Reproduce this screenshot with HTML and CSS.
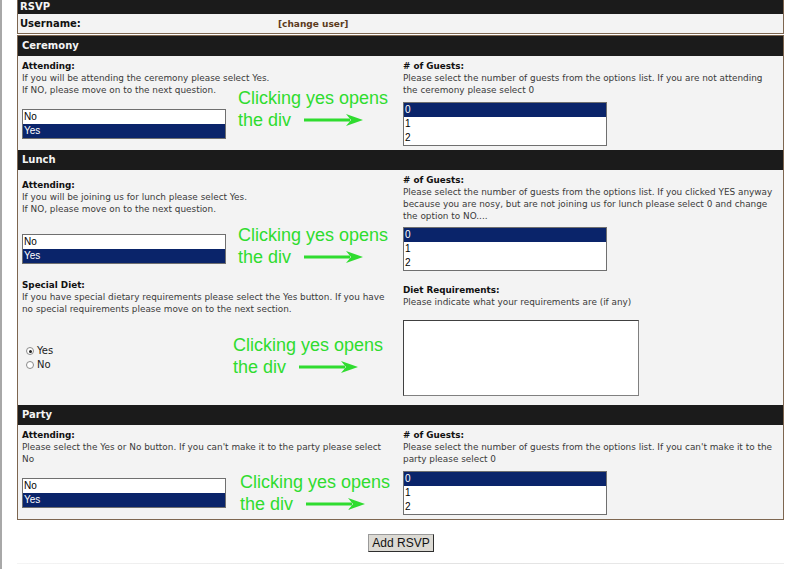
FILE: index.html
```html
<!DOCTYPE html>
<html lang="en">
<head>
    <meta charset="UTF-8">
    <title>RSVP</title>
    <link rel="stylesheet" href="styles.css">
</head>
<body>
    <div class="box top-box">
        <div class="bar bar-small">RSVP</div>
        <div class="user-row">
            <span class="user-label">Username:</span>
            <a class="change-user" href="#">[change user]</a>
        </div>
    </div>

    <div class="box form-box">
        <!-- Ceremony -->
        <div class="bar">Ceremony</div>
        <div class="row row-short">
            <div class="cell">
                <div class="label">Attending:</div>
                <div>If you will be attending the ceremony please select Yes.<br>If NO, please move on to the next question.</div>
                <div class="list list-left">
                    <div class="opt">No</div>
                    <div class="opt selected">Yes</div>
                </div>
            </div>
            <div class="cell">
                <div class="label"># of Guests:</div>
                <div>Please select the number of guests from the options list. If you are not attending<br>the ceremony please select 0</div>
                <div class="list">
                    <div class="opt selected">0</div>
                    <div class="opt">1</div>
                    <div class="opt">2</div>
                </div>
            </div>
            <div class="note note-ceremony">Clicking yes opens<br>the div <svg class="arrow" width="60" height="14" viewBox="0 0 60 14"><line x1="0" y1="7" x2="46" y2="7" stroke="#2fdc2f" stroke-width="3"/><polygon points="42,1 59,7 42,13 47,7" fill="#2fdc2f"/></svg></div>
        </div>

        <!-- Lunch -->
        <div class="bar">Lunch</div>
        <div class="row row-lunch">
            <div class="cell cell-low">
                <div class="label">Attending:</div>
                <div>If you will be joining us for lunch please select Yes.<br>If NO, please move on to the next question.</div>
                <div class="list list-left list-lunch">
                    <div class="opt">No</div>
                    <div class="opt selected">Yes</div>
                </div>
            </div>
            <div class="cell">
                <div class="label"># of Guests:</div>
                <div>Please select the number of guests from the options list. If you clicked YES anyway<br>because you are nosy, but are not joining us for lunch please select 0 and change<br>the option to NO....</div>
                <div class="list list-tight">
                    <div class="opt selected">0</div>
                    <div class="opt">1</div>
                    <div class="opt">2</div>
                </div>
            </div>
            <div class="note note-lunch">Clicking yes opens<br>the div <svg class="arrow" width="60" height="14" viewBox="0 0 60 14"><line x1="0" y1="7" x2="46" y2="7" stroke="#2fdc2f" stroke-width="3"/><polygon points="42,1 59,7 42,13 47,7" fill="#2fdc2f"/></svg></div>
        </div>
        <div class="row row-diet">
            <div class="cell">
                <div class="label">Special Diet:</div>
                <div>If you have special dietary requirements please select the Yes button. If you have<br>no special requirements please move on to the next section.</div>
                <div class="radios">
                    <div class="radio-item"><span class="radio checked"></span>Yes</div>
                    <div class="radio-item"><span class="radio"></span>No</div>
                </div>
            </div>
            <div class="cell cell-low">
                <div class="label">Diet Requirements:</div>
                <div>Please indicate what your requirements are (if any)</div>
                <div class="textarea"></div>
            </div>
            <div class="note note-diet">Clicking yes opens<br>the div <svg class="arrow" width="60" height="14" viewBox="0 0 60 14"><line x1="0" y1="7" x2="46" y2="7" stroke="#2fdc2f" stroke-width="3"/><polygon points="42,1 59,7 42,13 47,7" fill="#2fdc2f"/></svg></div>
        </div>

        <!-- Party -->
        <div class="bar">Party</div>
        <div class="row row-short">
            <div class="cell">
                <div class="label">Attending:</div>
                <div>Please select the Yes or No button. If you can't make it to the party please select<br>No</div>
                <div class="list list-left">
                    <div class="opt">No</div>
                    <div class="opt selected">Yes</div>
                </div>
            </div>
            <div class="cell">
                <div class="label"># of Guests:</div>
                <div>Please select the number of guests from the options list. If you can't make it to the<br>party please select 0</div>
                <div class="list">
                    <div class="opt selected">0</div>
                    <div class="opt">1</div>
                    <div class="opt">2</div>
                </div>
            </div>
            <div class="note note-party">Clicking yes opens<br>the div <svg class="arrow" width="60" height="14" viewBox="0 0 60 14"><line x1="0" y1="7" x2="46" y2="7" stroke="#2fdc2f" stroke-width="3"/><polygon points="42,1 59,7 42,13 47,7" fill="#2fdc2f"/></svg></div>
        </div>
    </div>

    <div class="actions">
        <button class="submit-btn" type="button">Add RSVP</button>
    </div>
    <div class="foot-line"></div>
</body>
</html>
```

FILE: styles.css
```css
body {
    margin: 0;
    min-height: 569px;
    border-left: 2px solid #a8a8a8;
    background-color: #fff;
    font-family: "DejaVu Sans", Verdana, sans-serif;
    font-size: 8.9px;
    line-height: 12px;
    color: #3a3a3a;
}

.box {
    margin: 0 16px 0 15px;
    border: 1px solid #7d6650;
    background-color: #f3f3f3;
}

.top-box {
    border-top: 0;
}

.form-box {
    margin-top: 1px;
}

.bar {
    height: 20px;
    padding-left: 4px;
    background-color: #1b1b1b;
    color: #f4f4f4;
    font-size: 10px;
    font-weight: bold;
    line-height: 20px;
}

.bar-small {
    height: 14px;
    padding-left: 2px;
    line-height: 14px;
}

.user-row {
    display: flex;
    align-items: center;
    height: 19px;
    padding-left: 2px;
}

.user-label {
    width: 258px;
    color: #111;
    font-size: 10px;
    font-weight: bold;
}

.change-user {
    color: #5b3a1d;
    font-size: 9px;
    font-weight: bold;
    text-decoration: none;
}

.row {
    position: relative;
    display: grid;
    grid-template-columns: 381px 1fr;
}

.row-short {
    height: 94px;
}

.row-lunch {
    height: 105px;
}

.row-diet {
    height: 130px;
}

.cell {
    padding: 4px 4px 0;
}

.cell-low {
    padding-top: 9px;
}

.label {
    color: #111;
    font-size: 8.8px;
    font-weight: bold;
}

/* fake list boxes */
.list {
    width: 202px;
    margin-top: 6px;
    border: 1px solid #6f6f6f;
    background-color: #fff;
    color: #000;
    font-family: "Liberation Sans", Arial, sans-serif;
    font-size: 10px;
    line-height: 14px;
}

.list-left {
    margin-top: 13px;
}

.list-lunch {
    margin-top: 19px;
}

.list-tight {
    margin-top: 5px;
}

.opt {
    height: 14px;
    padding-left: 1px;
}

.opt.selected {
    background-color: #0a246a;
    color: #fff;
}

.radios {
    margin-top: 29px;
    padding-left: 4px;
    color: #222;
    font-size: 10px;
    line-height: 14px;
}

.radio-item {
    display: flex;
    align-items: center;
    gap: 3px;
}

.radio {
    position: relative;
    width: 6px;
    height: 6px;
    border: 1px solid #8a8a8a;
    border-radius: 50%;
    background-color: #fff;
}

.radio.checked::after {
    content: "";
    position: absolute;
    left: 1.5px;
    top: 1.5px;
    width: 3px;
    height: 3px;
    border-radius: 50%;
    background-color: #222;
}

.textarea {
    width: 234px;
    height: 74px;
    margin-top: 12px;
    border: 1px solid;
    border-color: #404040 #808080 #808080 #404040;
    background-color: #fff;
}

/* green annotations drawn over the form */
.note {
    position: absolute;
    color: #2fdc2f;
    font-family: "Liberation Sans", Arial, sans-serif;
    font-size: 18px;
    line-height: 22px;
    white-space: nowrap;
}

.note-ceremony {
    top: 31px;
    left: 220px;
}

.note-lunch {
    top: 54px;
    left: 220px;
}

.note-diet {
    top: 59px;
    left: 215px;
}

.note-party {
    top: 46px;
    left: 222px;
}

.arrow {
    margin-left: 8px;
    vertical-align: -1px;
}

.actions {
    margin-top: 14px;
    text-align: center;
}

.submit-btn {
    height: 18px;
    padding: 0 3px;
    border: 1px solid;
    border-color: #9a9a9a #2e2e2e #2e2e2e #9a9a9a;
    background-color: #dcdad4;
    color: #111;
    font-family: "Liberation Sans", Arial, sans-serif;
    font-size: 12px;
    line-height: 16px;
}

.foot-line {
    height: 1px;
    margin: 11px 16px 0 15px;
    background: linear-gradient(to right, #f4f4f4, #e2e2e2 60%, #ededed);
}
```
